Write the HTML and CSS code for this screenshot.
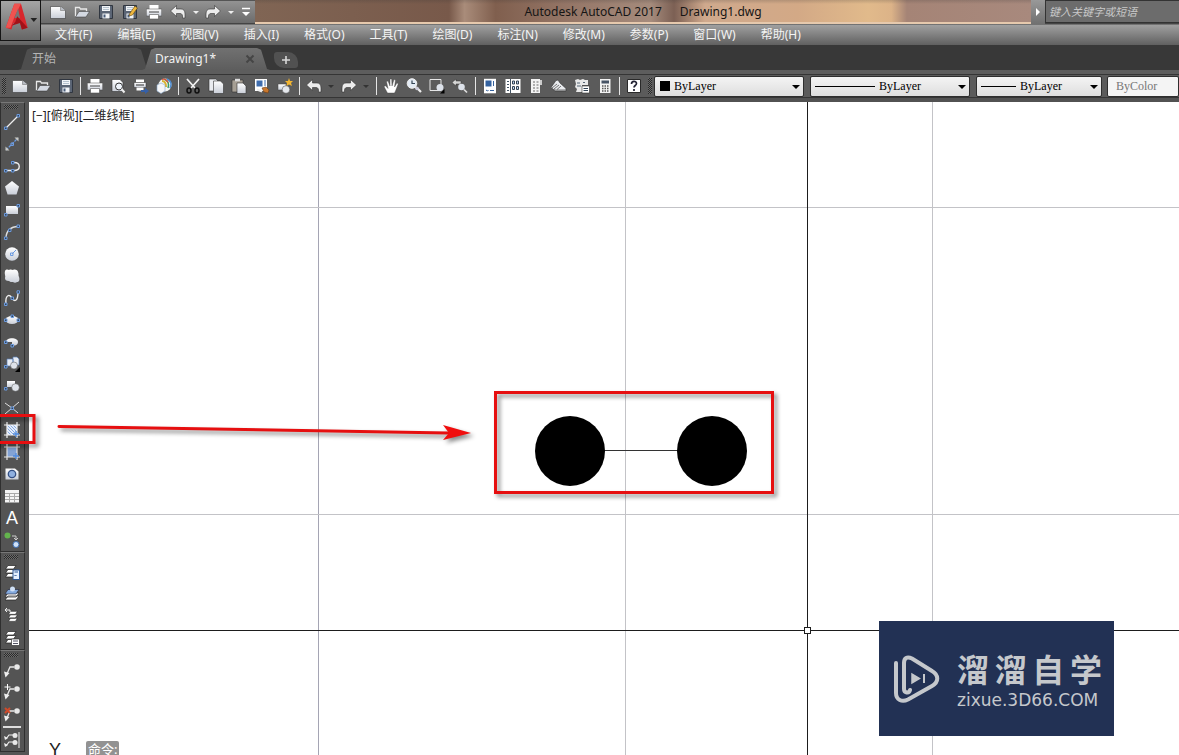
FILE: index.html
```html
<!DOCTYPE html>
<html lang="zh-CN">
<head>
<meta charset="utf-8">
<title>Autodesk AutoCAD 2017 - Drawing1.dwg</title>
<link rel="stylesheet" href="styles.css">
</head>
<body>
<svg class="defs" aria-hidden="true">
  <defs>
    <linearGradient id="metal" x1="0" y1="0" x2="0" y2="1"><stop offset="0" stop-color="#fff"/><stop offset="1" stop-color="#c9ced8"/></linearGradient>
    <pattern id="hatch" width="3" height="3" patternUnits="userSpaceOnUse"><rect width="3" height="3" fill="#e4ecfa"/><path d="M0 0l3 3" stroke="#86abe2"/></pattern>
    <symbol id="new" viewBox="0 0 16 16"><path d="M.5 2.500h10l5 4v8H.5z" fill="url(#metal)" stroke="#3b3b3b" stroke-width=".6"/><path d="M10.500 2.500v4h5" fill="#b8bcc4" stroke="#777" stroke-width=".6"/></symbol>
    <symbol id="open" viewBox="0 0 16 16"><path d="M1.500 12.500v-9h4l1 1.500h6v2.500" fill="none" stroke="#e8e8e8" stroke-width="1.300"/><path d="M1.500 13l3.500-5.500h10.500L12 13z" fill="#d4d9e2" stroke="#333" stroke-width=".5"/></symbol>
    <symbol id="save" viewBox="0 0 16 16"><path d="M1.500 1.500h13v13h-13z" fill="#5b6575" stroke="#303640"/><path d="M4 2h8v5H4zM4.500 9.500h7v5h-7z" fill="#f1f3f6"/><path d="M5.500 10.500h2v3h-2z" fill="#475a78"/><path d="M5 3.500h6M5 5.500h6" stroke="#9ab" stroke-width=".7"/></symbol>
    <symbol id="print" viewBox="0 0 16 16"><path d="M3.500 1h9v4.500h-9z" fill="#fff"/><path d="M.3 5h15.400v7H.3z" fill="url(#metal)" stroke="#444" stroke-width=".5"/><path d="M3 8h10" stroke="#444"/><path d="M3.500 10.500h9V15h-9z" fill="#fff" stroke="#555" stroke-width=".6"/></symbol>
    <symbol id="undo" viewBox="0 0 16 16"><path d="M.5 7L6.500 1.500V5H11q4 0 4 5v4h-2.500q.5-4.500-2.500-4.500H6.500v3z" fill="#ececec" stroke="#333" stroke-width=".6"/></symbol>
    <symbol id="redo" viewBox="0 0 16 16"><path d="M15.500 7L9.500 1.500V5H5q-4 0-4 5v4h2.500Q3 9.500 6 9.500h3.500v3z" fill="#ececec" stroke="#333" stroke-width=".6"/></symbol>
    <symbol id="layers" viewBox="0 0 16 16"><path d="M4 1.500h8L9.500 5h-8zM4 5.500h8L9.500 9h-8zM4 9.500h8L9.500 13h-8z" fill="#fff" stroke="#222" stroke-width=".7"/></symbol>
    <symbol id="leader" viewBox="0 0 16 16"><path d="M2 14L6 5h4" fill="none" stroke="#e6e6e6" stroke-width="1.300"/><path d="M0 9.500l1.500 6 4-4.500z" fill="#eee"/><circle cx="13" cy="5" r="2.800" fill="#e8e8e8"/></symbol>
  </defs>
</svg>

<header class="header">
  <button class="app-button" aria-label="应用程序菜单">
    <svg class="app-logo" viewBox="0 0 41 41">
      <path d="M5 28L14 3h7l7 25-6 2-2-7h-7l-2 7z" fill="#d8262c"/>
      <path d="M14 3h7l-7 14-4 11-5 0z" fill="#ef5350"/>
      <path d="M18 8l-4 10h6z" fill="#777"/>
      <path d="M17 16l11 12-6 2-2-7-9 3 4-4z" fill="#a11219"/>
      <path d="M31 18h7l-3.500 4z" fill="#222"/>
    </svg>
  </button>
  <div class="header-main">
    <div class="title-row">
      <div class="quick">
        <button aria-label="新建"><svg class="icon"><use href="#new"/></svg></button>
        <button aria-label="打开"><svg class="icon"><use href="#open"/></svg></button>
        <button aria-label="保存"><svg class="icon"><use href="#save"/></svg></button>
        <button aria-label="另存为"><svg class="icon" viewBox="0 0 16 16"><use href="#save"/><path d="M7 12l1-3 5-7 2.500 2-5 7z" fill="#efb73e" stroke="#5d430e" stroke-width=".6"/></svg></button>
        <button aria-label="打印"><svg class="icon"><use href="#print"/></svg></button>
        <button aria-label="放弃"><svg class="icon"><use href="#undo"/></svg></button>
        <button class="caret light" aria-label="放弃列表"></button>
        <button aria-label="重做"><svg class="icon"><use href="#redo"/></svg></button>
        <button class="caret light" aria-label="重做列表"></button>
        <button class="quick-more" aria-label="自定义"><svg class="icon-small" viewBox="0 0 10 10"><path d="M1 1.500h8" stroke="#fff" stroke-width="1.500"/><path d="M1 5h8L5 9z" fill="#fff"/></svg></button>
      </div>
      <div class="title"><span>Autodesk AutoCAD 2017</span><span>Drawing1.dwg</span></div>
      <button class="search-toggle" aria-label="展开"><svg class="icon-small" viewBox="0 0 10 10"><path d="M3 1l4 4-4 4z" fill="#fff"/></svg></button>
      <input class="search" type="text" placeholder="键入关键字或短语" aria-label="搜索">
    </div>
    <nav class="menu">
      <button>文件(F)</button><button>编辑(E)</button><button>视图(V)</button><button>插入(I)</button><button>格式(O)</button><button>工具(T)</button><button>绘图(D)</button><button>标注(N)</button><button>修改(M)</button><button>参数(P)</button><button>窗口(W)</button><button>帮助(H)</button>
    </nav>
  </div>
</header>

<div class="tabs">
  <button class="tab tab-start">开始</button>
  <div class="tab tab-active"><span>Drawing1*</span><button class="tab-close" aria-label="关闭"><svg class="icon-small" viewBox="0 0 10 10"><path d="M1.500 1.500l7 7m0-7l-7 7" stroke="#454545" stroke-width="2"/></svg></button></div>
  <button class="tab-add" aria-label="新图形"><svg class="icon-small" viewBox="0 0 10 10"><path d="M5 1v8M1 5h8" stroke="#d8d8d8" stroke-width="1.600"/></svg></button>
</div>

<div class="toolbar">
  <i class="grip"></i>
  <div class="group">
    <button aria-label="新建"><svg class="icon"><use href="#new"/></svg></button>
    <button aria-label="打开"><svg class="icon"><use href="#open"/></svg></button>
    <button aria-label="保存"><svg class="icon"><use href="#save"/></svg></button>
  </div>
  <div class="group">
    <button aria-label="打印"><svg class="icon"><use href="#print"/></svg></button>
    <button aria-label="打印预览"><svg class="icon" viewBox="0 0 16 16"><path d="M2 1.500h8l3 3v9H2z" fill="url(#metal)" stroke="#333" stroke-width=".6"/><circle cx="9" cy="8.500" r="3.500" fill="#eef3fa" stroke="#333"/><path d="M11.500 11l3 3.500" stroke="#eee" stroke-width="2"/></svg></button>
    <button aria-label="发布"><svg class="icon" viewBox="0 0 16 16"><path d="M3 1.500h8v3H3z" fill="#fff"/><path d="M1 4.500h12v5H1z" fill="url(#metal)" stroke="#333" stroke-width=".5"/><path d="M3 7h8" stroke="#333"/><path d="M3.500 9.500h7v3h-7z" fill="#fff"/><path d="M8 12h4v-2l4 3-4 3v-2H8z" fill="#3560a8"/></svg></button>
    <button aria-label="三维打印"><svg class="icon" viewBox="0 0 16 16"><circle cx="9" cy="7" r="6.500" fill="#f4f6f2"/><path d="M6 3c3 0 4 3 4 6" stroke="#d8b330" stroke-width="2" fill="none"/><path d="M8 1c5 2 5 6 4 9" stroke="#3f9b66" stroke-width="1.500" fill="none"/><path d="M11 1c4 2 5 5 3 9" stroke="#4d8bd0" stroke-width="1.500" fill="none"/><path d="M6 1.500c3-1 5 1 6 3" stroke="#d8533b" stroke-width="1.300" fill="none"/><path d="M1 7l4-2 4 2v6l-4 2.500L1 13z" fill="#f5f6f8" stroke="#8ac" stroke-width=".6"/></svg></button>
  </div>
  <div class="group">
    <button aria-label="剪切"><svg class="icon" viewBox="0 0 16 16"><path d="M2 1l8 9M14 1l-8 9" stroke="#f2f2f2" stroke-width="1.700"/><ellipse cx="4" cy="12.500" rx="2" ry="2.500" fill="none" stroke="#111" stroke-width="1.500"/><ellipse cx="12" cy="12.500" rx="2" ry="2.500" fill="none" stroke="#111" stroke-width="1.500"/></svg></button>
    <button aria-label="复制"><svg class="icon" viewBox="0 0 16 16"><path d="M1 1h7l2 2v10H1z" fill="#e9ebef" stroke="#333" stroke-width=".6"/><path d="M5.500 3h7l3 3v9.500h-10z" fill="url(#metal)" stroke="#333" stroke-width=".6"/></svg></button>
    <button aria-label="粘贴"><svg class="icon" viewBox="0 0 16 16"><path d="M1 2h11v12H1z" fill="#a69f94" stroke="#333" stroke-width=".6"/><path d="M4 .8h5v2.500H4z" fill="#ddd"/><path d="M6 5h6l3 3v7.500H6z" fill="url(#metal)" stroke="#333" stroke-width=".6"/></svg></button>
    <button aria-label="特性匹配"><svg class="icon" viewBox="0 0 16 16"><path d="M1 1h12v12H1z" fill="#fff"/><path d="M2.500 2.500h6v6h-6z" fill="#3e6cad"/><path d="M10 3h2M10 5h2M10 7h2" stroke="#3e6cad"/><path d="M8 10l4-1 3 3-1 3-4-1z" fill="#c8772d" stroke="#6b3c14" stroke-width=".6"/><path d="M3 11.500l5 2" stroke="#eee" stroke-width="2"/></svg></button>
    <button aria-label="块编辑器"><svg class="icon" viewBox="0 0 16 16"><path d="M1 6h8v6H1z" fill="url(#metal)" stroke="#444" stroke-width=".5"/><circle cx="9" cy="11.500" r="3.800" fill="#e4e7ec" stroke="#444" stroke-width=".5"/><path d="M12 0l1 3 3 0-2 2 1 3-3-1.500L9.500 8l.5-3L8 3h3z" fill="#f2b530"/></svg></button>
  </div>
  <div class="group pad">
    <button aria-label="放弃"><svg class="icon"><use href="#undo"/></svg></button>
    <button class="caret" aria-label="放弃列表"></button>
    <button aria-label="重做"><svg class="icon"><use href="#redo"/></svg></button>
    <button class="caret" aria-label="重做列表"></button>
  </div>
  <div class="group pad">
    <button aria-label="平移"><svg class="icon" viewBox="0 0 16 16"><path d="M4.500 15L1 8.500l1.500-.7L5 10.500 3.500 3.500 5 3l2 5L7 1h1.700L9 8l2-6.500 1.500.5L11.500 9 14 5l1.300.7L12.500 13l-1 2z" fill="#fff" stroke="#444" stroke-width=".4"/></svg></button>
    <button aria-label="实时缩放"><svg class="icon" viewBox="0 0 16 16"><circle cx="6" cy="5.500" r="4.800" fill="#e3ebf5" stroke="#eee"/><path d="M6 2.500v3h3" fill="none" stroke="#345" stroke-width="1.200"/><path d="M9 9l2 1 4 4" stroke="#eee" stroke-width="2.200"/><circle cx="11" cy="10.500" r="1.800" fill="#ccd"/></svg></button>
    <button aria-label="窗口缩放"><svg class="icon" viewBox="0 0 16 16"><path d="M1 1.500h11v11H1z" fill="none" stroke="#e6e6e6"/><circle cx="11" cy="9.500" r="3.500" fill="#dde2ea"/><path d="M15.500 11v4.500H11z" fill="#000"/></svg></button>
    <button aria-label="上一个视图"><svg class="icon" viewBox="0 0 16 16"><path d="M0 4.500L4 1v2h5v3H4v2z" fill="#d5d5d5" stroke="#333" stroke-width=".5"/><circle cx="9.500" cy="9" r="3.300" fill="#dde2ea"/><path d="M12 11.500l3 3" stroke="#ddd" stroke-width="1.700"/></svg></button>
  </div>
  <div class="group">
    <button aria-label="特性"><svg class="icon" viewBox="0 0 16 16"><path d="M2 .8h12v14.500H2z" fill="#fff"/><path d="M3.500 2.500h6v6h-6z" fill="#34629f"/><path d="M11.500 3v5M4 12l1.500 1 1-1M8 12.500h4" stroke="#34629f" fill="none"/></svg></button>
    <button aria-label="设计中心"><svg class="icon" viewBox="0 0 16 16"><path d="M.5 1h15v14H.5z" fill="#fff"/><path d="M5.500 1v14M2 3.500h2M2 6.500h2M2 9.500h2M2 12.500h2" stroke="#456"/><path d="M7.500 3h2v3h-2zM11.500 3h2v3h-2zM7.500 8.500h2v3h-2zM11.500 8.500h2v3h-2z" fill="#bed3f0" stroke="#345"/></svg></button>
    <button aria-label="工具选项板"><svg class="icon" viewBox="0 0 16 16"><path d="M3 1h9v14H3z" fill="#f3f3f3"/><path d="M12 2h2v5h-2z" fill="#ccc"/><path d="M5 4h2M8.500 4h2M5 7h2M8.500 7h2M5 10h2M8.500 10h2M5 13h2M8.500 13h2" stroke="#999" stroke-width="1.300"/></svg></button>
    <button aria-label="图纸集"><svg class="icon" viewBox="0 0 16 16"><path d="M0 9.500L5 2.500l2-.5 2 3 6 5.500v2.500H4z" fill="#e9ebee" stroke="#333" stroke-width=".6"/><path d="M1 10l5-4M3 11l5-4M6 11.500l4-3.500M0 10.500l4 1.500h11" stroke="#555" stroke-width=".8" fill="none"/></svg></button>
    <button aria-label="标记集"><svg class="icon" viewBox="0 0 16 16"><path d="M1 2l3-1 2 1 3-1 2 1 3 0v5H8v7H2l1-3-2-2 1-3z" fill="#e8e8e8"/><path d="M3 5h3M9 4.500h2M3 8h4" stroke="#567"/><path d="M8 8h7.500v7H8z" fill="#fff" stroke="#333" stroke-width=".6"/><path d="M9.500 10.500h4.500M9.500 12.500h4.500" stroke="#345"/></svg></button>
    <button aria-label="计算器"><svg class="icon" viewBox="0 0 16 16"><path d="M3 1h10.500v14H3z" fill="#f3f3f3"/><path d="M4.500 2.500H12v3H4.500z" fill="#465365"/><path d="M5 8h7M5 10.500h7M5 13h7" stroke="#555" stroke-width="1.400" stroke-dasharray="1.500 1"/></svg></button>
  </div>
  <div class="group">
    <button aria-label="帮助"><svg class="icon" viewBox="0 0 16 16"><path d="M1.500 1.500h13v13h-13z" fill="#fff" stroke="#2a2a2a"/><path d="M5.500 6c0-3.500 5-3.300 5-.5 0 2-2.500 2-2.500 4M8 11v2" fill="none" stroke="#223" stroke-width="1.700"/></svg></button>
  </div>
  <i class="grip grip-edge"></i>
  <div class="combo combo-color">
    <i class="swatch"></i>
    <select aria-label="颜色控制"><option>ByLayer</option></select>
  </div>
  <div class="combo combo-line">
    <i class="sample"></i>
    <select aria-label="线型控制"><option>ByLayer</option></select>
  </div>
  <div class="combo combo-weight">
    <i class="sample"></i>
    <select aria-label="线宽控制"><option>ByLayer</option></select>
  </div>
  <div class="combo combo-plot">
    <select aria-label="打印样式控制" disabled><option>ByColor</option></select>
  </div>
</div>

<main class="workspace">
  <aside class="side">
    <div class="side-group">
      <i class="grip-h"></i>
      <button aria-label="直线"><svg class="icon" viewBox="0 0 16 16"><path d="M1.500 14.500l13-13" stroke="#eee" stroke-width="1.300"/><path d="M.5 13h2.500v2.500H.5zM13 .5h2.500V3H13z" fill="#345" stroke="#6c9be0"/></svg></button>
      <button aria-label="构造线"><svg class="icon" viewBox="0 0 16 16"><path d="M2 14L14 2" stroke="#6c9be0" stroke-width="1.300" stroke-dasharray="3 1"/><path d="M10.500 1.500h4v4zM1.500 10.500v4h4z" fill="#c9c9c4"/><path d="M7 7h2.500v2.500H7z" fill="none" stroke="#6c9be0"/></svg></button>
      <button aria-label="多段线"><svg class="icon" viewBox="0 0 16 16"><path d="M2 12.500h8c7 0 7-8 0-8" fill="none" stroke="#eee" stroke-width="1.400"/><path d="M.5 11.500H3V14H.5zM7.500 11.500H10V14H7.500zM7.500 3.500H10V6H7.500z" fill="#345" stroke="#6c9be0"/></svg></button>
      <button aria-label="多边形"><svg class="icon" viewBox="0 0 16 16"><path d="M8 1l7 5.500-2.500 8h-9L1 6.500z" fill="url(#metal)"/></svg></button>
      <button aria-label="矩形"><svg class="icon" viewBox="0 0 16 16"><path d="M2 4h12v8H2z" fill="url(#metal)"/><path d="M.5 11.500H3V14H.5zM13 2.500h2.500V5H13z" fill="#345" stroke="#6c9be0"/></svg></button>
      <button aria-label="圆弧"><svg class="icon" viewBox="0 0 16 16"><path d="M2 14C2 7 7 2.500 14 2.500" fill="none" stroke="#ddd" stroke-width="1.400"/><path d="M.5 13H3v2.500H.5zM4.500 5H7v2.500H4.500zM13 1h2.500v2.500H13z" fill="#345" stroke="#6c9be0"/></svg></button>
      <button aria-label="圆"><svg class="icon" viewBox="0 0 16 16"><circle cx="8" cy="8" r="6.800" fill="url(#metal)"/><path d="M8 8l4-4" stroke="#6c9be0"/><path d="M6.500 7H9v2.500H6.500z" fill="none" stroke="#6c9be0"/></svg></button>
      <button aria-label="修订云线"><svg class="icon" viewBox="0 0 16 16"><path d="M1 3c1-2 3-1.500 4-1 2-1 3 0 4 0 2-1 5 0 5 2 1 2 0 3 1 5 1 3 0 5-2 5-1 1-3 1-4 0-2 0-3 0-4-1-3 0-4-1-4-3 1-2-1-4 0-7z" fill="url(#metal)"/></svg></button>
      <button aria-label="样条曲线"><svg class="icon" viewBox="0 0 16 16"><path d="M2 14C1 4 6 4 8 8s6 4 6-6" fill="none" stroke="#eee" stroke-width="1.400"/><path d="M.5 13H3v2.500H.5zM7 7h2.500v2.500H7zM13 .8h2.500v2.500H13z" fill="#345" stroke="#6c9be0"/></svg></button>
      <button aria-label="椭圆"><svg class="icon" viewBox="0 0 16 16"><ellipse cx="8" cy="8" rx="6.500" ry="4" fill="url(#metal)"/><path d="M.5 7H3v2.500H.5zM13 7h2.500v2.500H13zM7 3h2.500v2.500H7z" fill="#345" stroke="#6c9be0"/></svg></button>
      <button aria-label="椭圆弧"><svg class="icon" viewBox="0 0 16 16"><path d="M2 8c0-5 12-5 12 0 0 3-3 4-6 3.500V8z" fill="url(#metal)"/><path d="M.5 7H3v2.500H.5zM7 10.500h2.500V13H7z" fill="#345" stroke="#6c9be0"/></svg></button>
      <button aria-label="插入块"><svg class="icon" viewBox="0 0 16 16"><path d="M3 3h6v7H3zM9 1h4l2 2v6H9z" fill="#e8edf5" stroke="#5980b8" stroke-width=".7"/><circle cx="10" cy="9.500" r="3.500" fill="#dfe3ea" stroke="#555" stroke-width=".5"/><path d="M.5 9.500H3V12H.5z" fill="#345" stroke="#6c9be0"/><path d="M16 11v5h-5z" fill="#000"/></svg></button>
      <button aria-label="创建块"><svg class="icon" viewBox="0 0 16 16"><path d="M3 3h8v6H3z" fill="url(#metal)"/><circle cx="11.500" cy="9.500" r="3.800" fill="#dfe3ea" stroke="#555" stroke-width=".5"/><path d="M.5 9.500H3V12H.5z" fill="#345" stroke="#6c9be0"/></svg></button>
      <button aria-label="点"><svg class="icon" viewBox="0 0 16 16"><path d="M1 3l7 5 7-6M8 8l-7 6M8 8l6 5" fill="none" stroke="#ddd"/><path d="M7 7h2.500v2.500H7z" fill="#345" stroke="#6c9be0"/></svg></button>
      <button aria-label="图案填充"><svg class="icon" viewBox="0 0 16 16"><path d="M3 3h10v10H3z" fill="url(#hatch)"/><path d="M3 0v16M13 0v16M0 3h16M0 13h16" stroke="#f3f3f3" stroke-width="1.200"/><path d="M12 9v6M9 12h6" stroke="#4f8be0" stroke-width="1.300"/></svg></button>
      <button aria-label="渐变色"><svg class="icon" viewBox="0 0 16 16"><path d="M3 3h10v10H3z" fill="#83a3d5"/><path d="M3 0v16M13 0v16M0 3h16M0 13h16" stroke="#e5e5e5" stroke-width="1.200"/><path d="M12 9v6M9 12h6" stroke="#4f8be0" stroke-width="1.300"/></svg></button>
      <button aria-label="面域"><svg class="icon" viewBox="0 0 16 16"><path d="M1.500 2.500H11l3.500 3v8h-13z" fill="url(#metal)"/><circle cx="8" cy="8" r="3.700" fill="#8fb0e0" stroke="#345085" stroke-width="1.300"/></svg></button>
      <button aria-label="表格"><svg class="icon" viewBox="0 0 16 16"><path d="M1 2h14v12.500H1z" fill="#f5f5f5"/><path d="M1 5.500h14M1 8.500h14M1 11.500h14M5.500 5v9M10.500 5v9" stroke="#aaa"/></svg></button>
      <button class="text-tool" aria-label="多行文字">A</button>
      <button aria-label="添加选定对象"><svg class="icon" viewBox="0 0 16 16"><circle cx="3.500" cy="3.500" r="3" fill="#63b34d"/><path d="M8 4h4v4m-2-2l2 2 2-2" fill="none" stroke="#ccc"/><circle cx="12" cy="12.500" r="3" fill="#cfe1f7" stroke="#3a6db2"/></svg></button>
    </div>
    <div class="side-group">
      <i class="grip-h"></i>
      <button aria-label="图层特性"><svg class="icon" viewBox="0 0 16 16"><use href="#layers"/><path d="M9 6h6.500v9.500H9z" fill="#e4efff" stroke="#2d5794"/><path d="M10.500 8h3.500M10.500 11l1 1 1-1" stroke="#2d5794" fill="none"/></svg></button>
      <button aria-label="将对象的图层设为当前"><svg class="icon" viewBox="0 0 16 16"><path d="M4 10h11l-3 4H1zM4 7h11l-3 4H1z" fill="#fff" stroke="#222" stroke-width=".7"/><path d="M4 3.500h11l-3 4.500H1z" fill="#84aade" stroke="#223" stroke-width=".6"/><circle cx="8.500" cy="3" r="2.500" fill="#cfe0f5"/></svg></button>
      <button aria-label="上一个图层"><svg class="icon" viewBox="0 0 16 16"><svg x="3" y="2" width="14" height="14"><use href="#layers"/></svg><path d="M6 4V2H1m2-2L1 2l2 2" fill="none" stroke="#eee"/></svg></button>
      <button aria-label="图层状态"><svg class="icon" viewBox="0 0 16 16"><use href="#layers"/><path d="M7.500 9h8v6.500h-8z" fill="#fff" stroke="#333" stroke-width=".7"/><path d="M9 11h5M9 13.500h5" stroke="#556"/></svg></button>
    </div>
    <div class="side-group">
      <i class="grip-h"></i>
      <button aria-label="多重引线"><svg class="icon"><use href="#leader"/></svg></button>
      <button aria-label="添加引线"><svg class="icon" viewBox="0 0 16 16"><use href="#leader"/><path d="M3.500 0v6M.5 3h6" stroke="#fff"/></svg></button>
      <button aria-label="删除引线"><svg class="icon" viewBox="0 0 16 16"><use href="#leader"/><path d="M1 2l5 5m0-5L1 7" stroke="#cf4a2a" stroke-width="2"/></svg></button>
      <hr class="side-line">
      <button aria-label="对齐引线"><svg class="icon" viewBox="0 0 16 16"><path d="M15 0v16" stroke="#eee"/><path d="M2 7l3-4h5M2 14l3-4h5" fill="none" stroke="#eee" stroke-width="1.200"/><path d="M0 4l1 4 3-2zM0 11l1 4 3-2z" fill="#eee"/><circle cx="11" cy="3.500" r="2.500" fill="#e8e8e8"/><circle cx="11" cy="10.500" r="2.500" fill="#e8e8e8"/></svg></button>
    </div>
  </aside>

  <section class="canvas" aria-label="绘图区">
    <svg class="drawing">
      <g stroke="#c3c3c7"><path d="M596.500 0v2000M903.500 0v2000"/><path d="M289.500 0v2000" stroke="#a5a5b4"/><path d="M0 105.500h4000M0 412.500h4000"/></g>
      <path d="M541 348.500h142" stroke="#333"/>
      <circle cx="541" cy="349" r="35"/><circle cx="683" cy="349" r="35"/>
      <path d="M778.500 0v525M778.500 532v2000M0 528.500h775M782 528.500h4000" stroke="#1d1d1d"/>
      <rect x="775.500" y="525.500" width="6" height="6" fill="#fff" stroke="#1d1d1d"/>
    </svg>
    <div class="view-label">[−][俯视][二维线框]</div>
    <div class="ucs-y">Y</div>
    <div class="command">命令:</div>
    <div class="watermark">
      <svg class="mark-logo" viewBox="0 0 48 50" fill="none" stroke="#c5c8cc" stroke-linecap="round">
        <path d="M3 9v30c0 7 6 9.500 12 6.500l24-13.500c7-4 7-11 0-15L19 4.500C14 2 11 4 11 9v26c0 4 5 5 6 1" stroke-width="4"/>
        <path d="M19 20v9l7.500-4.500z" fill="#c5c8cc" stroke-width="1.500"/><path d="M31 20v9" stroke-width="2" stroke-linecap="butt"/>
      </svg>
      <div class="mark-text">
        <div class="mark-name"><span>溜</span><span>溜</span><span>自</span><span>学</span></div>
        <div class="mark-site">zixue.3D66.COM</div>
      </div>
    </div>
  </section>

  <svg class="annotations" aria-hidden="true">
    <g class="notes">
      <rect x="-4" y="313.500" width="38" height="27" fill="none" stroke="#e60f10" stroke-width="3"/>
      <rect x="495.500" y="290.500" width="277" height="100" fill="none" stroke="#e60f10" stroke-width="3"/>
      <path d="M59 324.500L448 331" stroke="#e60f10" stroke-width="3" stroke-linecap="round"/>
      <path d="M443 323l28 8-28 7 6-7z" fill="#f00d0d"/>
    </g>
  </svg>
</main>
</body>
</html>
```
FILE: styles.css
```css
* { box-sizing: border-box; }

body {
  margin: 0;
  height: 100vh;
  display: flex;
  flex-direction: column;
  overflow: hidden;
  background: #525252;
  font: 12px/16px "Noto Sans", "Noto Sans CJK SC", sans-serif;
}

button {
  display: flex;
  align-items: center;
  justify-content: center;
  flex: none;
  margin: 0;
  padding: 0;
  border: 0;
  background: none;
  color: inherit;
  font: inherit;
}

.defs { position: absolute; width: 0; height: 0; }
.icon { width: 16px; height: 16px; flex: none; }
.icon-small { width: 10px; height: 10px; flex: none; }

/* Title bar and menu */
.header {
  display: flex;
  flex: none;
  background: linear-gradient(#454545 24px, #a0a0a0 25px, #606060 45px);
}
.app-button {
  width: 41px;
  height: 41px;
  border: 1px solid #151515;
  background: linear-gradient(#a5a5a5, #666);
}
.app-logo { width: 39px; height: 39px; }
.header-main { flex: 1; min-width: 0; }
.title-row { display: flex; height: 24px; }
.quick {
  display: flex;
  flex: none;
  width: 214px;
  padding-left: 5px;
  border-top: 1px solid #555;
  border-bottom: 1px solid #444;
  background: linear-gradient(#939393, #6b6b6b);
}
.quick button { width: 24px; }
.quick .caret { width: 11px; }
.quick .quick-more { width: 20px; }
.caret::before {
  content: "";
  border: 3px solid transparent;
  border-top-color: #333;
  border-bottom: 0;
}
.caret.light::before { border-top-color: #eee; }
.title {
  display: flex;
  flex: 1;
  justify-content: center;
  gap: 18px;
  border-bottom: 2px solid #e6c9ad;
  background:
    linear-gradient(#3333, transparent 4px),
    linear-gradient(90deg, #806554, #78594a 25%, #a98c7a 27%, #805f4e 31%, #947566 40%, #a58b7c 51%, #7c6054 54%, #cfa98d 58%, #d3a986 70%, #e1ba8b 79%, #dcb388 82%, #a58476 84%, #a8897d);
  color: #151515;
  line-height: 23px;
  white-space: nowrap;
}
.search-toggle { width: 14px; background: linear-gradient(#999, #707070); }
.search {
  flex: none;
  width: 134px;
  height: 23px;
  padding: 0 3px;
  border: 1px solid #333;
  border-right: 0;
  background: #6c6c6c;
  font: italic 11px/20px "Noto Sans", "Noto Sans CJK SC", sans-serif;
}
.search::placeholder { color: #c8c8c8; opacity: 1; }
.menu {
  display: flex;
  gap: 25px;
  height: 21px;
  padding-left: 14px;
  color: #f4f4f4;
}

/* File tabs */
.tabs {
  display: flex;
  flex: none;
  align-items: flex-end;
  height: 29px;
  padding-left: 18px;
  border-bottom: 4px solid #5d5d5d;
  background: #383838;
}
.tab {
  display: flex;
  align-items: center;
  height: 22px;
  clip-path: polygon(0 100%, 3px 95%, 9px 8%, 13px 0, calc(100% - 13px) 0, calc(100% - 9px) 8%, calc(100% - 3px) 95%, 100% 100%);
}
.tab-start {
  justify-content: flex-start;
  width: 132px;
  padding-left: 14px;
  background: #4e4e4e;
  color: #b5b5b5;
}
.tab-active {
  justify-content: space-between;
  width: 128px;
  margin-left: -8px;
  padding: 0 15px 0 13px;
  background: linear-gradient(#717171, #5d5d5d);
  color: #f2f2f2;
}
.tab-add {
  width: 24px;
  height: 16px;
  margin: 0 0 2px 4px;
  border-radius: 3px 10px 3px 10px;
  background: #515151;
}

/* Standard toolbar */
.toolbar {
  display: flex;
  flex: none;
  align-items: center;
  height: 24px;
  padding-left: 2px;
  border: solid #353535;
  border-width: 1px 0;
  background: #5b5b5b;
}
.grip, .grip-h {
  flex: none;
  background: repeating-conic-gradient(#2a2a2a 0 25%, #6c6c6c 0 50%) 0 0 / 2px 2px;
}
.grip { width: 4px; height: 16px; margin-right: 2px; }
.grip-edge { margin: 0 2px 0 3px; }
.group { display: flex; flex: none; }
.group button { width: 23px; height: 22px; }
.group .caret { width: 12px; }
.group.pad { padding: 0 1px 0 0; }
.group + .group::before {
  content: "";
  width: 1px;
  margin: 2px 2px 2px 3px;
  background: #e5e5e5;
}
.combo {
  position: relative;
  flex: none;
  height: 21px;
  margin-right: 6px;
}
.combo select {
  width: 100%;
  height: 21px;
  padding: 0 18px 0 19px;
  border: 1px solid #2e2e2e;
  border-radius: 2px;
  appearance: none;
  background: linear-gradient(#f4f4f4, #dedede);
  color: #000;
  opacity: 1;
  font: 12px/19px "Liberation Serif", serif;
}
.combo:not(.combo-plot)::after {
  content: "";
  position: absolute;
  top: 9px;
  right: 4px;
  border: 4px solid transparent;
  border-top-color: #000;
  border-bottom: 0;
}
.combo-color { width: 150px; }
.combo-line { width: 160px; }
.combo-line select { padding-left: 68px; }
.combo-weight { width: 126px; margin-right: 5px; }
.combo-weight select { padding-left: 43px; }
.combo-plot { flex: 1; min-width: 70px; margin-right: 0; }
.combo-plot select { padding: 0 8px; background: #f4f4f4; color: #777; }
.swatch {
  position: absolute;
  top: 5px;
  left: 6px;
  width: 10px;
  height: 10px;
  background: #000;
}
.sample {
  position: absolute;
  top: 10px;
  left: 5px;
  width: 60px;
  height: 1px;
  background: #000;
}
.combo-weight .sample { width: 35px; }

/* Workspace */
.workspace {
  position: relative;
  display: flex;
  flex: 1;
  min-height: 0;
  margin-top: 4px;
  overflow: hidden;
}
.side {
  flex: none;
  width: 29px;
  padding-right: 4px;
  background: #555;
}
.side-group {
  display: flex;
  flex-direction: column;
  border: 1px solid #2f2f2f;
  border-top-color: #777;
  background: #545454;
}
.side-group button { width: 22px; height: 22px; }
.grip-h { width: 14px; height: 4px; margin: 2px 0 2px 3px; }
.side-group .text-tool { color: #fff; font: 18px/22px "Liberation Sans", sans-serif; }
.side-line { width: 18px; height: 2px; margin: 1px 0 1px 2px; border: 0; background: #ddd; }

.canvas {
  position: relative;
  flex: 1;
  min-width: 0;
  overflow: hidden;
  background: #fff;
}
.drawing, .annotations {
  position: absolute;
  inset: 0;
  width: 100%;
  height: 100%;
}
.annotations { pointer-events: none; }
.notes { filter: drop-shadow(3px 3px 2px #0007); }
.view-label { position: absolute; top: 6px; left: 3px; color: #222; }
.ucs-y {
  position: absolute;
  top: 638px;
  left: 20px;
  color: #222;
  font: 18px/20px "Liberation Sans", sans-serif;
}
.command {
  position: absolute;
  top: 639px;
  left: 57px;
  padding: 0 2px;
  border-radius: 2px;
  background: #929292;
  color: #fff;
  font-size: 13px;
}
.watermark {
  position: absolute;
  right: 65px;
  bottom: 19px;
  display: flex;
  align-items: center;
  gap: 16px;
  width: 235px;
  height: 115px;
  padding: 0 12px 0 14px;
  background: #223154;
  color: #c5c8cc;
}
.mark-logo { width: 48px; height: 50px; flex: none; }
.mark-text { flex: 1; }
.mark-name {
  display: flex;
  justify-content: space-between;
  font: bold 32px/42px "Noto Sans CJK SC", sans-serif;
}
.mark-site { font: 17px/22px "DejaVu Sans", sans-serif; white-space: nowrap; }
```
